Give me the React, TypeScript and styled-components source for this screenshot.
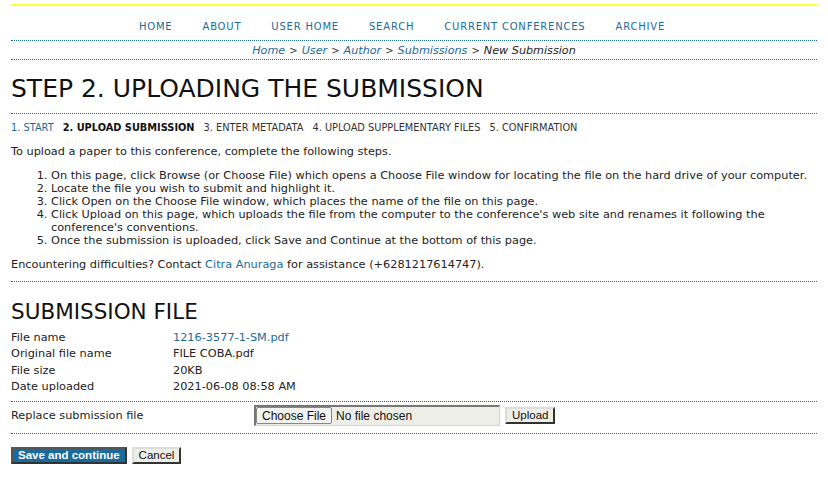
import React from 'react';
import styled, { createGlobalStyle } from 'styled-components';

const BLUE = '#1b6b99';
const TEXT = '#222';

const GlobalStyle = createGlobalStyle`
  html, body {
    margin: 0;
    padding: 0;
    background: #fff;
  }
  body {
    font-family: "DejaVu Sans", Verdana, sans-serif;
    font-size: 11.3px;
    color: ${TEXT};
  }
`;

const Page = styled.div`
  margin: 0 11px;
  padding-top: 4px;
`;

const TopRule = styled.div`
  height: 2px;
  background: #ffff33;
`;

const NavBar = styled.nav`
  display: flex;
  justify-content: center;
  gap: 30px;
  height: 35px;
  align-items: center;
  padding: 7px 24px 0 0;
  box-sizing: border-box;
  border-bottom: 1px dotted ${BLUE};
`;

const NavLink = styled.a`
  color: ${BLUE};
  font-size: 10px;
  letter-spacing: 0.8px;
  text-decoration: none;
`;

const Breadcrumb = styled.div`
  height: 18px;
  display: flex;
  align-items: center;
  justify-content: center;
  font-style: italic;
  font-size: 11.2px;
  border-bottom: 1px dotted ${BLUE};
  color: #333;
`;

const Crumb = styled.a<{ $current?: boolean }>`
  color: ${({ $current }) => ($current ? '#222' : BLUE)};
  text-decoration: none;
`;

const Sep = styled.span`
  margin: 0 4px;
  font-style: normal;
  font-size: 10px;
`;

const Title = styled.h1`
  margin: 0;
  padding: 15px 0 10px;
  font-size: 25px;
  font-weight: normal;
  line-height: 28px;
  color: #111;
  border-bottom: 1px dotted ${BLUE};
`;

const Steps = styled.div`
  display: flex;
  gap: 9px;
  padding: 4px 0 0;
  height: 18px;
  align-items: center;
  font-size: 9.8px;
  color: #333;
`;

const Step = styled.span<{ $active?: boolean; $done?: boolean }>`
  font-weight: ${({ $active }) => ($active ? 'bold' : 'normal')};
  color: ${({ $active, $done }) => ($active ? '#111' : $done ? BLUE : '#333')};
`;

const Para = styled.p`
  margin: 0;
  line-height: 13px;
`;

const Intro = styled(Para)`
  padding-top: 9px;
`;

const StepList = styled.ol`
  margin: 11px 0 0;
  padding-left: 40px;
  line-height: 13px;
`;

const Contact = styled(Para)`
  padding: 11px 0 10px;
  border-bottom: 1px dotted ${BLUE};
`;

const Link = styled.a`
  color: ${BLUE};
  text-decoration: none;
`;

const SubTitle = styled.h2`
  margin: 0;
  padding: 18px 0 5px;
  font-size: 21.5px;
  font-weight: normal;
  line-height: 24px;
  color: #111;
`;

const InfoTable = styled.div`
  display: grid;
  grid-template-columns: 162px 1fr;
  grid-auto-rows: 16.5px;
  align-items: center;
  padding-bottom: 6px;
  border-bottom: 1px dotted ${BLUE};
`;

const ReplaceRow = styled.div`
  display: grid;
  grid-template-columns: 238px auto auto 1fr;
  align-items: center;
  column-gap: 5px;
  padding: 3px 0 7px;
  border-bottom: 1px dotted ${BLUE};
`;

const FileInput = styled.input`
  width: 246px;
  height: 21px;
  box-sizing: border-box;
  margin: 0;
  padding: 0;
  background: #eeeee8;
  border: 1px solid #d6d6cf;
  border-top: 2px solid #777;
  border-left: 2px solid #777;
  font-family: "Liberation Sans", Arial, sans-serif;
  font-size: 12px;
  color: #111;

  &::file-selector-button {
    font-family: "Liberation Sans", Arial, sans-serif;
    font-size: 12px;
    height: 17px;
    margin: 0 4px 0 0;
    padding: 0 5px;
    background: #f2f2ee;
    border: 1px solid #888;
    border-radius: 2px;
    color: #111;
  }
`;

const Button = styled.button<{ $primary?: boolean }>`
  height: 17px;
  padding: 0 5px;
  margin: 0;
  font-family: "Liberation Sans", Arial, sans-serif;
  font-size: 11.5px;
  font-weight: ${({ $primary }) => ($primary ? 'bold' : 'normal')};
  color: ${({ $primary }) => ($primary ? '#fff' : '#111')};
  background: ${({ $primary }) => ($primary ? '#1a6a9a' : '#eeeee8')};
  border: 2px solid #333;
  border-top-color: ${({ $primary }) => ($primary ? '#555' : '#ddd')};
  border-left-color: ${({ $primary }) => ($primary ? '#555' : '#ddd')};
  line-height: 13px;
`;

const Actions = styled.div`
  display: flex;
  gap: 5px;
  padding-top: 13px;
`;

const navItems = ['HOME', 'ABOUT', 'USER HOME', 'SEARCH', 'CURRENT CONFERENCES', 'ARCHIVE'];

const fileInfo: [string, string, boolean?][] = [
  ['File name', '1216-3577-1-SM.pdf', true],
  ['Original file name', 'FILE COBA.pdf'],
  ['File size', '20KB'],
  ['Date uploaded', '2021-06-08 08:58 AM'],
];

const App = () => {
  const crumbs = ['Home', 'User', 'Author', 'Submissions'];
  return (
    <>
      <GlobalStyle />
      <Page>
        <TopRule />
        <NavBar>
          {navItems.map((item) => (
            <NavLink key={item} href="#">
              {item}
            </NavLink>
          ))}
        </NavBar>
        <Breadcrumb>
          {crumbs.map((c) => (
            <React.Fragment key={c}>
              <Crumb href="#">{c}</Crumb>
              <Sep>&gt;</Sep>
            </React.Fragment>
          ))}
          <Crumb $current>New Submission</Crumb>
        </Breadcrumb>

        <Title>STEP 2. UPLOADING THE SUBMISSION</Title>

        <Steps>
          <Step $done>1. START</Step>
          <Step $active>2. UPLOAD SUBMISSION</Step>
          <Step>3. ENTER METADATA</Step>
          <Step>4. UPLOAD SUPPLEMENTARY FILES</Step>
          <Step>5. CONFIRMATION</Step>
        </Steps>

        <Intro>To upload a paper to this conference, complete the following steps.</Intro>
        <StepList>
          <li>
            On this page, click Browse (or Choose File) which opens a Choose File window for locating the file on the
            hard drive of your computer.
          </li>
          <li>Locate the file you wish to submit and highlight it.</li>
          <li>Click Open on the Choose File window, which places the name of the file on this page.</li>
          <li>
            Click Upload on this page, which uploads the file from the computer to the conference's web site and
            renames it following the conference's conventions.
          </li>
          <li>Once the submission is uploaded, click Save and Continue at the bottom of this page.</li>
        </StepList>
        <Contact>
          Encountering difficulties? Contact <Link href="#">Citra Anuraga</Link> for assistance (+6281217614747).
        </Contact>

        <SubTitle>SUBMISSION FILE</SubTitle>
        <InfoTable>
          {fileInfo.map(([label, value, link]) => (
            <React.Fragment key={label}>
              <span>{label}</span>
              {link ? <Link href="#">{value}</Link> : <span>{value}</span>}
            </React.Fragment>
          ))}
        </InfoTable>
        <ReplaceRow>
          <span>Replace submission file</span>
          <FileInput type="file" />
          <Button>Upload</Button>
        </ReplaceRow>

        <Actions>
          <Button $primary>Save and continue</Button>
          <Button>Cancel</Button>
        </Actions>
      </Page>
    </>
  );
};

export default App;
